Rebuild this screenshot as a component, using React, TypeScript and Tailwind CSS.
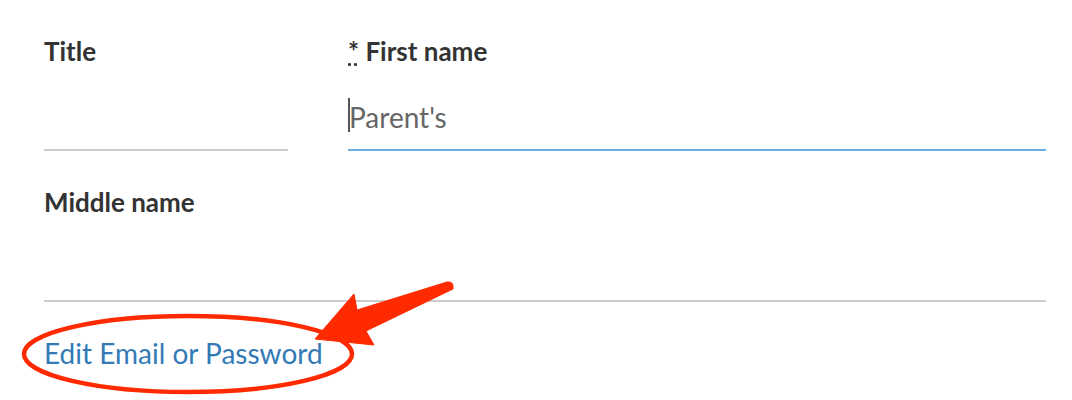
import React from "react";

const font = { fontFamily: "Lato, 'Open Sans', sans-serif" };

const App: React.FC = () => {
  return (
    <div className="relative h-[400px] w-[1072px] overflow-hidden bg-white" style={font}>
      <div className="flex flex-col pl-[44px] pr-[26px] pt-[36px]">
        {/* row 1 */}
        <div className="flex flex-row gap-[60px]">
          <div className="flex w-[244px] flex-col">
            <label className="text-[26px] font-bold leading-[31px] text-[#333]">Title</label>
            <div className="h-[84px] border-b-2 border-[#ccc]"></div>
          </div>
          <div className="flex grow flex-col">
            <label className="text-[26px] font-bold leading-[31px] text-[#333]">
              <abbr className="no-underline" style={{ textDecoration: "underline dotted" }} title="required">
                *
              </abbr>{" "}
              First name
            </label>
            <div className="relative flex h-[84px] items-start border-b-2 border-[#66aee6] pt-[33px]">
              <span className="absolute left-0 top-[31px] h-[34px] w-[2px] bg-[#555]"></span>
              <input
                className="h-[34px] w-full bg-transparent pl-[1px] text-[28px] leading-[34px] text-[#555] outline-none placeholder:text-[#666]"
                style={font}
                placeholder="Parent's"
              />
            </div>
          </div>
        </div>
        {/* row 2 */}
        <div className="mt-[36px] flex flex-col">
          <label className="text-[26px] font-bold leading-[31px] text-[#333]">Middle name</label>
          <div className="h-[84px] border-b-2 border-[#ccc]"></div>
        </div>
        <a href="#" className="mt-[34px] self-start text-[28px] leading-[34px] text-[#337ab7]">
          Edit Email or Password
        </a>
      </div>

      {/* annotation: circle + arrow */}
      <svg className="pointer-events-none absolute left-0 top-0" width="1072" height="400" viewBox="0 0 1072 400">
        <ellipse cx="188" cy="354" rx="164" ry="38" fill="none" stroke="#ff2a00" strokeWidth="4.5" />
        <path
          d="M315 339 L354 294 L357 310 L447 282 Q454 281 453 289 L366 331 L374 345 Z"
          fill="#ff2a00"
          stroke="#ff2a00"
          strokeWidth="1"
          strokeLinejoin="round"
        />
      </svg>
    </div>
  );
};

export default App;
